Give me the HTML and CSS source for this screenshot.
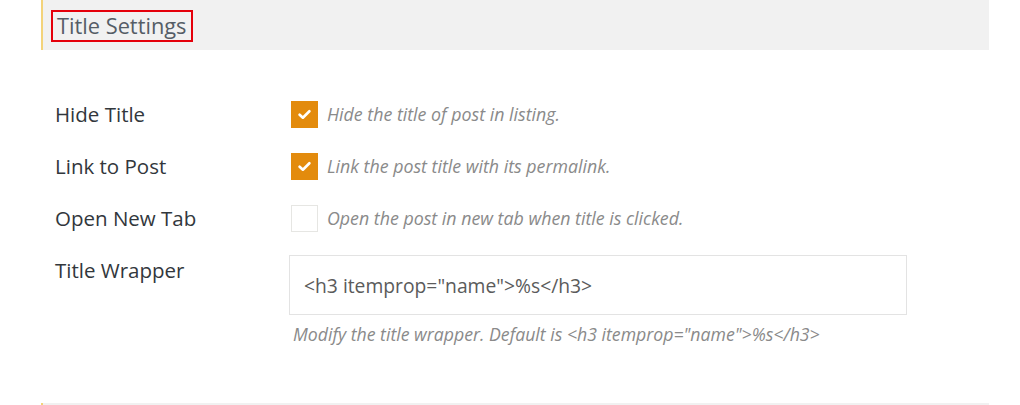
FILE: index.html
```html
<!DOCTYPE html>
<html>
<head>
<meta charset="utf-8">
<link rel="stylesheet" href="styles.css">
</head>
<body>
<div class="panel">
  <div class="section-head">
    <h2 class="section-title">Title Settings</h2>
  </div>
  <div class="rows">
    <div class="row">
      <div class="label">Hide Title</div>
      <div class="field">
        <span class="check on"><svg viewBox="0 0 12 10" width="13" height="11"><path d="M1.5 5.2 L4.5 8 L10.5 2" fill="none" stroke="#fff" stroke-width="2.4" stroke-linecap="round" stroke-linejoin="round"/></svg></span>
        <span class="desc">Hide the title of post in listing.</span>
      </div>
    </div>
    <div class="row">
      <div class="label">Link to Post</div>
      <div class="field">
        <span class="check on"><svg viewBox="0 0 12 10" width="13" height="11"><path d="M1.5 5.2 L4.5 8 L10.5 2" fill="none" stroke="#fff" stroke-width="2.4" stroke-linecap="round" stroke-linejoin="round"/></svg></span>
        <span class="desc">Link the post title with its permalink.</span>
      </div>
    </div>
    <div class="row">
      <div class="label">Open New Tab</div>
      <div class="field">
        <span class="check"></span>
        <span class="desc">Open the post in new tab when title is clicked.</span>
      </div>
    </div>
    <div class="row row-input">
      <div class="label">Title Wrapper</div>
      <div class="field-col">
        <div class="text-input">&lt;h3 itemprop="name"&gt;%s&lt;/h3&gt;</div>
        <div class="help">Modify the title wrapper. Default is &lt;h3 itemprop="name"&gt;%s&lt;/h3&gt;</div>
      </div>
    </div>
  </div>
  <div class="section-head next"></div>
</div>
</body>
</html>
```
FILE: styles.css
```css
html, body {
  margin: 0;
  padding: 0;
  background: #fff;
}
body {
  font-family: "Open Sans", "Noto Sans", sans-serif;
  width: 1020px;
  height: 405px;
  overflow: hidden;
}
.panel {
  margin-left: 41px;
  width: 948px;
}
.section-head {
  background: #f1f1f1;
  border-left: 2px solid #f3d37a;
  height: 50px;
  box-sizing: border-box;
  padding: 10px 0 0 8px;
}
.section-title {
  display: inline-block;
  margin: 0;
  font-weight: 400;
  font-size: 21.8px;
  line-height: 28px;
  color: #555d66;
  border: 2px solid #e5000b;
  padding: 0 4px 0 4px;
}
.rows {
  padding-top: 38px;
  height: 315px;
  box-sizing: border-box;
}
.row {
  display: flex;
  align-items: center;
  height: 52px;
}
.label {
  width: 248px;
  box-sizing: border-box;
  padding-left: 14px;
  font-size: 20.5px;
  color: #32373c;
}
.field {
  display: flex;
  align-items: center;
  padding-left: 2px;
}
.check {
  width: 27px;
  height: 27px;
  box-sizing: border-box;
  border: 1px solid #e6e6e3;
  background: #fff;
  display: flex;
  align-items: center;
  justify-content: center;
  margin-right: 9px;
}
.check.on {
  background: #e38b0d;
  border-color: #e38b0d;
}
.desc {
  font-style: italic;
  font-size: 17.8px;
  color: #8a8a8a;
}
.row-input {
  align-items: flex-start;
  height: auto;
}
.row-input .label {
  padding-top: 12px;
}
.field-col {
  display: flex;
  flex-direction: column;
  padding-top: 11px;
}
.text-input {
  width: 618px;
  height: 60px;
  box-sizing: border-box;
  border: 1px solid #e3e3e3;
  padding: 0 14px;
  display: flex;
  align-items: center;
  font-size: 19.3px;
  color: #5b5b5b;
}
.help {
  margin-top: 7px;
  padding-left: 4px;
  font-style: italic;
  font-size: 17.7px;
  color: #8a8a8a;
}
.section-head.next {
  margin-top: 38px;
  height: 20px;
}
```
